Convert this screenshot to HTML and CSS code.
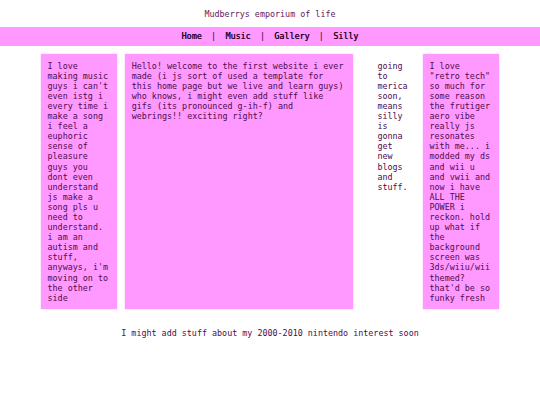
FILE: index.html
```html
<!DOCTYPE html>
<html>
<head>
<meta charset="utf-8">
<link rel="stylesheet" href="styles.css">
</head>
<body>
<div class="title">Mudberrys emporium of life</div>
<nav class="nav">
  <a class="link">Home</a><span class="sep">|</span><a class="link">Music</a><span class="sep">|</span><a class="link">Gallery</a><span class="sep">|</span><a class="link">Silly</a>
</nav>
<main class="main">
  <div class="box box-side">I love making music guys i can't even istg i every time i make a song i feel a euphoric sense of pleasure guys you dont even understand js make a song pls u need to understand. i am an autism and stuff, anyways, i'm moving on to the other side</div>
  <div class="box box-center">Hello! welcome to the first website i ever made (i js sort of used a template for this home page but we live and learn guys) who knows, i might even add stuff like gifs (its pronounced g-ih-f) and webrings!! exciting right?</div>
  <div class="plain">going to merica soon, means silly is gonna get new blogs and stuff.</div>
  <div class="box box-side">I love "retro tech" so much for some reason the frutiger aero vibe really js resonates with me... i modded my ds and wii u and vwii and now i have ALL THE POWER i reckon. hold up what if the background screen was 3ds/wiiu/wii themed? that'd be so funky fresh</div>
</main>
<footer class="footer">I might add stuff about my 2000-2010 nintendo interest soon</footer>
</body>
</html>
```
FILE: styles.css
```css
html, body {
  margin: 0;
  padding: 0;
  background: #ffffff;
}
body {
  font-family: "DejaVu Sans Mono", monospace;
  font-size: 8.4px;
  line-height: 10.1px;
  color: #4e0c4e;
}
.title {
  text-align: center;
  padding-top: 8.5px;
  color: #5e225e;
}
.nav {
  margin-top: 8.5px;
  background: #ff99ff;
  text-align: center;
  padding: 4.2px 0;
  color: #2a052a;
}
.link {
  text-shadow: 0.25px 0 0 #2a052a;
}
.sep {
  margin: 0 9.3px;
}
.main {
  width: 458px;
  margin: 8.5px auto 0;
  display: flex;
  gap: 8.2px;
}
.box {
  background: #ff99ff;
  padding: 6.5px 6.5px;
  box-shadow: 0 0 1.5px rgba(255, 170, 255, 0.9);
}
.box-side {
  width: 63px;
  flex: none;
}
.box-center {
  width: 215px;
  flex: none;
}
.plain {
  flex: 1;
  padding: 6.5px 4px 6.5px 16px;
}
.footer {
  text-align: center;
  margin-top: 18.3px;
}
```
